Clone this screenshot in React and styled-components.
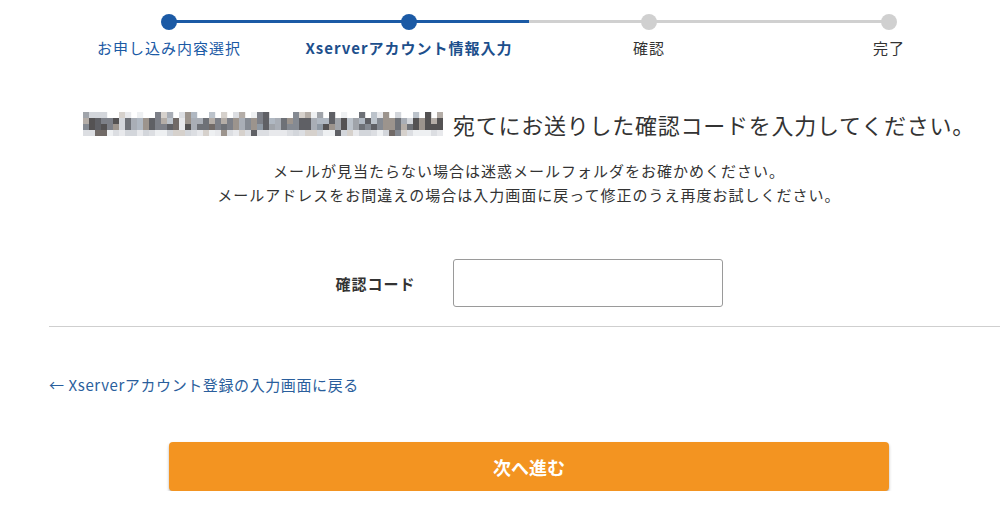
import React from 'react';
import styled, { createGlobalStyle } from 'styled-components';

const GlobalStyle = createGlobalStyle`
  html, body {
    margin: 0;
    padding: 0;
    background: #ffffff;
    overflow: hidden;
  }
  body {
    font-family: "Noto Sans CJK JP", "Liberation Sans", sans-serif;
    color: #333333;
  }
`;

const BLUE = '#1b5aa5';
const GRAY = '#d0d0d0';

const Page = styled.div`
  width: 960px;
  margin-left: 49px;
`;

const Stepper = styled.ol`
  list-style: none;
  margin: 0;
  padding: 14px 0 0;
  display: grid;
  grid-template-columns: repeat(4, 240px);
`;

const Step = styled.li`
  position: relative;
  display: flex;
  flex-direction: column;
  align-items: center;

  &::before,
  &::after {
    content: '';
    position: absolute;
    top: 6px;
    height: 3px;
    width: 50%;
  }
  &::before {
    left: 0;
    background: ${({ $left }) => $left || 'transparent'};
  }
  &::after {
    right: 0;
    background: ${({ $right }) => $right || 'transparent'};
  }
`;

const Dot = styled.span`
  position: relative;
  z-index: 1;
  width: 16px;
  height: 16px;
  border-radius: 50%;
  background: ${({ $done }) => ($done ? BLUE : GRAY)};
`;

const StepLabel = styled.span`
  margin-top: 8px;
  font-size: 15px;
  line-height: 20px;
  letter-spacing: 1px;
  white-space: nowrap;
  color: ${({ $active, $done }) => ($active ? '#1d4f8c' : $done ? BLUE : '#333')};
  font-weight: ${({ $active }) => ($active ? 700 : 400)};
`;

const Heading = styled.h1`
  margin: 50px 0 0;
  display: flex;
  justify-content: center;
  align-items: center;
  gap: 10px;
  font-size: 22px;
  line-height: 32px;
  font-weight: 400;
  letter-spacing: 0.75px;
  white-space: nowrap;
  color: #333;
`;

const Note = styled.p`
  margin: 19px 0 0;
  text-align: center;
  font-size: 15px;
  line-height: 24px;
  letter-spacing: 1px;
  color: #333;
`;

const FormRow = styled.div`
  margin-top: 52px;
  display: flex;
  justify-content: center;
  align-items: center;
  gap: 37px;
`;

const FieldLabel = styled.label`
  font-size: 15px;
  font-weight: 700;
  letter-spacing: 1px;
  color: #333;
`;

const CodeInput = styled.input`
  box-sizing: border-box;
  width: 270px;
  height: 48px;
  border: 1px solid #9a9a9a;
  border-radius: 3px;
  padding: 0 12px;
  font-size: 16px;
  outline: none;
`;

const Divider = styled.hr`
  margin: 19px 0 0;
  border: 0;
  border-top: 1px solid #cfcfcf;
`;

const BackLink = styled.a`
  display: block;
  margin-top: 48px;
  font-size: 15px;
  line-height: 20px;
  letter-spacing: 0.6px;
  color: #2a5e9c;
  text-decoration: none;
  white-space: nowrap;
`;

const ButtonWrap = styled.div`
  margin-top: 47px;
  display: flex;
  justify-content: center;
`;

const NextButton = styled.button`
  width: 720px;
  height: 49px;
  border: 0;
  border-radius: 4px;
  background: #f39421;
  box-shadow: 0 2px 3px rgba(0, 0, 0, 0.3);
  color: #ffffff;
  font-family: inherit;
  font-size: 18px;
  font-weight: 700;
  cursor: pointer;
`;

// pixelated (mosaic) email address
const DARK = ['#5f6065', '#6e7177', '#7d8088', '#8f99a4', '#9c948d', '#716a67', '#545253', '#858a92'];
const MID = ['#a9aeb6', '#b4ada7', '#b0b8c2', '#a0a4aa', '#bcc3cb'];
const LIGHT = ['#e8e9ec', '#dcdee2', '#d3d6db', '#d6d1cc', '#eef0f2'];

const buildMosaic = () => {
  let seed = 11;
  const rnd = () => {
    seed = (seed * 9301 + 49297) % 233280;
    return seed / 233280;
  };
  const pick = (arr) => arr[Math.floor(rnd() * arr.length)];
  const cells = [];
  const cols = 60;
  for (let c = 0; c < cols; c++) {
    const roll = rnd();
    const base = roll < 0.3 ? pick(MID) : roll < 0.4 ? pick(LIGHT) : pick(DARK);
    const tall = rnd() < 0.3;
    const desc = rnd() < 0.1;
    // ascender row
    if (tall) cells.push({ x: c * 6, y: 0, fill: rnd() < 0.6 ? pick(MID) : base });
    else if (rnd() < 0.35) cells.push({ x: c * 6, y: 0, fill: pick(LIGHT) });
    // body rows
    cells.push({ x: c * 6, y: 6, fill: rnd() < 0.25 ? pick(MID) : base });
    cells.push({ x: c * 6, y: 12, fill: rnd() < 0.25 ? pick(DARK) : base });
    // descender row
    cells.push({ x: c * 6, y: 18, fill: desc ? pick(DARK) : pick(LIGHT) });
  }
  return cells;
};

const MOSAIC = buildMosaic();

const BlurredEmail = () => (
  <svg width="360" height="24" viewBox="0 0 360 24" aria-label="メールアドレス">
    {MOSAIC.map((cell, i) => (
      <rect key={i} x={cell.x} y={cell.y} width="6.2" height="6.2" fill={cell.fill} />
    ))}
  </svg>
);

const steps = [
  { label: 'お申し込み内容選択', done: true, left: null, right: BLUE },
  { label: 'Xserverアカウント情報入力', done: true, active: true, left: BLUE, right: BLUE },
  { label: '確認', done: false, left: GRAY, right: GRAY },
  { label: '完了', done: false, left: GRAY, right: null },
];

export default function App() {
  return (
    <>
      <GlobalStyle />
      <Page>
        <Stepper>
          {steps.map((s) => (
            <Step key={s.label} $left={s.left} $right={s.right}>
              <Dot $done={s.done} />
              <StepLabel $done={s.done} $active={s.active}>{s.label}</StepLabel>
            </Step>
          ))}
        </Stepper>

        <Heading>
          <BlurredEmail />
          <span>宛てにお送りした確認コードを入力してください。</span>
        </Heading>

        <Note>
          メールが見当たらない場合は迷惑メールフォルダをお確かめください。
          <br />
          メールアドレスをお間違えの場合は入力画面に戻って修正のうえ再度お試しください。
        </Note>

        <FormRow>
          <FieldLabel htmlFor="code">確認コード</FieldLabel>
          <CodeInput id="code" type="text" />
        </FormRow>

        <Divider />

        <BackLink href="#">← Xserverアカウント登録の入力画面に戻る</BackLink>

        <ButtonWrap>
          <NextButton type="button">次へ進む</NextButton>
        </ButtonWrap>
      </Page>
    </>
  );
}
